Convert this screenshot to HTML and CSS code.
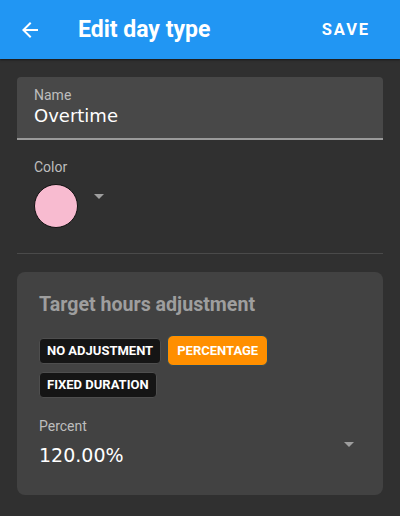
FILE: index.html
```html
<!DOCTYPE html>
<html>
<head>
<meta charset="utf-8">
<link rel="stylesheet" href="styles.css">
</head>
<body>
<header class="appbar">
  <svg class="back" width="24" height="24" viewBox="0 0 24 24"><path d="M20 11H7.83l5.59-5.59L12 4l-8 8 8 8 1.41-1.41L7.83 13H20v-2z" fill="#fff"/></svg>
  <h1 class="title">Edit day type</h1>
  <span class="save">SAVE</span>
</header>
<main class="content">
  <div class="textfield">
    <div class="label">Name</div>
    <div class="value">Overtime</div>
  </div>
  <div class="colorfield">
    <div class="label">Color</div>
    <div class="colorrow">
      <span class="swatch"></span>
      <span class="caret"></span>
    </div>
  </div>
  <hr class="divider">
  <section class="card">
    <h2 class="cardtitle">Target hours adjustment</h2>
    <div class="chips">
      <span class="chip">NO ADJUSTMENT</span>
      <span class="chip selected">PERCENTAGE</span>
      <span class="chip">FIXED DURATION</span>
    </div>
    <div class="selectfield">
      <div>
        <div class="label">Percent</div>
        <div class="value big">120.00%</div>
      </div>
      <span class="caret"></span>
    </div>
  </section>
</main>
</body>
</html>
```
FILE: styles.css
```css
html, body { margin: 0; padding: 0; }
body {
  background: #303030;
  font-family: Roboto, "Liberation Sans", sans-serif;
  width: 400px;
  height: 516px;
  overflow: hidden;
}
.appbar {
  height: 59px;
  background: #2196f3;
  display: flex;
  align-items: center;
  padding: 0 30px 0 18px;
  box-shadow: 0 1px 2px rgba(0,0,0,0.5);
}
.back { flex: none; }
.title {
  margin: 0 0 0 36px;
  flex: 1;
  color: #fff;
  font-size: 23px;
  font-weight: 700;
}
.save {
  color: #fff;
  font-size: 16.5px;
  font-weight: 700;
  letter-spacing: 1.9px;
}
.content {
  padding: 18px 17px 0;
}
.label {
  color: #bdbdbd;
  font-size: 14px;
  line-height: 16px;
}
.value {
  font-family: "DejaVu Sans", sans-serif;
  color: #fff;
  font-size: 18px;
  line-height: 22px;
  margin-top: 2px;
}
.value.big {
  font-size: 19px;
  margin-top: 10px;
}
.textfield {
  background: #484848;
  border-radius: 4px 4px 0 0;
  border-bottom: 2px solid #9a9a9a;
  padding: 10px 17px 0;
  height: 51px;
}
.colorfield {
  padding: 19px 17px 0;
  height: 94px;
}
.colorrow {
  display: flex;
  align-items: flex-start;
  margin-top: 9px;
}
.swatch {
  width: 42px;
  height: 42px;
  border-radius: 50%;
  background: #f8bbd0;
  border: 1px solid #111;
}
.caret {
  width: 0;
  height: 0;
  border-left: 5px solid transparent;
  border-right: 5px solid transparent;
  border-top: 5px solid #9e9e9e;
}
.colorrow .caret { margin: 10px 0 0 16px; }
.divider {
  border: 0;
  border-top: 1px solid #4a4a4a;
  margin: 0 0 18px;
}
.card {
  background: #424242;
  border-radius: 8px;
  padding: 21px 22px 0;
  height: 202px;
}
.cardtitle {
  margin: 0;
  color: #9e9e9e;
  font-size: 19.6px;
  font-weight: 700;
  line-height: 24px;
}
.chips {
  display: flex;
  flex-wrap: wrap;
  align-items: center;
  gap: 6px 6px;
  width: 240px;
  margin-top: 18px;
}
.chip {
  background: #151515;
  border: 1px solid #4e4e4e;
  border-radius: 4px;
  color: #fff;
  font-size: 13px;
  font-weight: 700;
  padding: 0 7px;
  height: 24px;
  line-height: 24px;
}
.chip.selected {
  background: #ff8f00;
  border-color: #2b4a5a;
  border-radius: 6px;
  height: 29px;
  line-height: 29px;
  padding: 0 9px;
}
.selectfield {
  display: flex;
  justify-content: space-between;
  align-items: center;
  margin-top: 20px;
  padding-right: 7px;
}
.selectfield .caret { margin-top: 4px; }
```
